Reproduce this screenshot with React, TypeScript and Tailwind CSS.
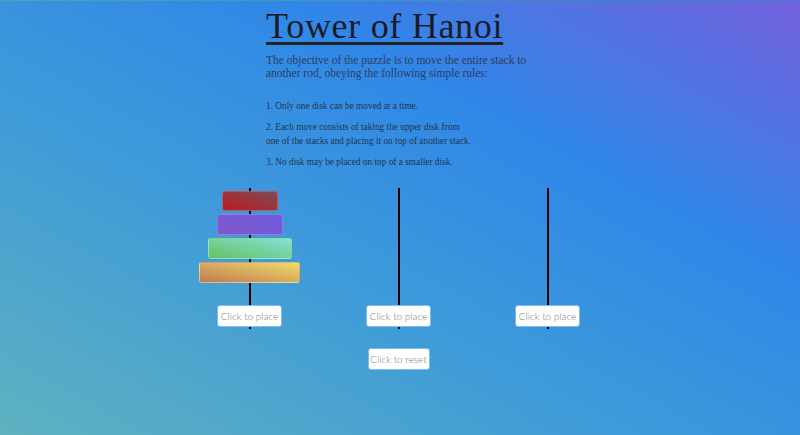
import { useState } from 'react';

type Disk = { id: number; w: string; h: string; bg: string };

const DISKS: Disk[] = [
    { id: 1, w: 'w-[56px]', h: 'h-[20px]', bg: 'bg-[linear-gradient(to_top_right,#bb1c1c,#7c4a5a)]' },
    { id: 2, w: 'w-[66px]', h: 'h-[21px]', bg: 'bg-[linear-gradient(to_top_right,#8457c8,#6c5de2)]' },
    { id: 3, w: 'w-[84px]', h: 'h-[21px]', bg: 'bg-[linear-gradient(to_top_right,#67c062,#82e2d4)]' },
    { id: 4, w: 'w-[101px]', h: 'h-[21px]', bg: 'bg-[linear-gradient(to_top_right,#c17a52,#eedc6a)]' },
];

const RULES = [
    ['1. Only one disk can be moved at a time.'],
    ['2. Each move consists of taking the upper disk from', 'one of the stacks and placing it on top of another stack.'],
    ['3. No disk may be placed on top of a smaller disk.'],
];

const Button = ({ label, onClick, width }: { label: string; onClick?: () => void; width: string }) => (
    <button
        onClick={onClick}
        className={`${width} h-[22px] bg-white rounded-[3px] border border-[#7cbcef] text-[10px] font-light text-[#7a7a7a] font-['Lato',sans-serif] leading-none cursor-pointer`}
    >
        {label}
    </button>
);

export default function App() {
    const [towers, setTowers] = useState<number[][]>([[1, 2, 3, 4], [], []]);

    const reset = () => setTowers([[1, 2, 3, 4], [], []]);

    return (
        <div className="min-h-screen w-full border-t border-black/10 bg-[linear-gradient(to_top_right,#5eb2c0_0%,#3f9bd8_38%,#2f87e8_68%,#7360dd_100%)] font-['Liberation_Serif',serif]">
            <div className="w-[268px] mx-auto">
                <h1 className="mt-[5px] text-[36px] leading-[40px] tracking-[0.7px] text-[#1b1b26] underline decoration-[3px] decoration-[#222] underline-offset-[4px] whitespace-nowrap">
                    Tower of Hanoi
                </h1>
                <p className="mt-[8px] text-[11.5px] leading-[13px] text-[#2f3d5f] whitespace-nowrap">
                    The objective of the puzzle is to move the entire stack to
                    <br />
                    another rod, obeying the following simple rules:
                </p>
                <div className="mt-[19px] flex flex-col gap-[7px] text-[9.3px] leading-[14px] text-[#26344f]">
                    {RULES.map((lines) => (
                        <p key={lines[0]} className="whitespace-nowrap">
                            {lines.map((l) => (
                                <span key={l} className="block">
                                    {l}
                                </span>
                            ))}
                        </p>
                    ))}
                </div>
            </div>

            <div className="w-[447px] ml-[175px] mt-[19px]">
                <div className="flex">
                    {towers.map((tower, idx) => (
                        <div
                            key={idx}
                            className="w-[149px] h-[141px] flex flex-col items-center pt-[3px] pb-[2px] bg-[linear-gradient(#000,#000)] bg-no-repeat bg-[length:2px_100%] bg-center"
                        >
                            <div className="flex flex-col items-center gap-[3px]">
                                {tower.map((d) => {
                                    const disk = DISKS[d - 1];
                                    return (
                                        <div
                                            key={disk.id}
                                            className={`${disk.w} ${disk.h} ${disk.bg} rounded-[3px] border border-white/20`}
                                        />
                                    );
                                })}
                            </div>
                            <div className="mt-auto">
                                <Button label="Click to place" width="w-[65px]" />
                            </div>
                        </div>
                    ))}
                </div>
                <div className="flex justify-center mt-[19px]">
                    <Button label="Click to reset" width="w-[62px]" onClick={reset} />
                </div>
            </div>
        </div>
    );
}
